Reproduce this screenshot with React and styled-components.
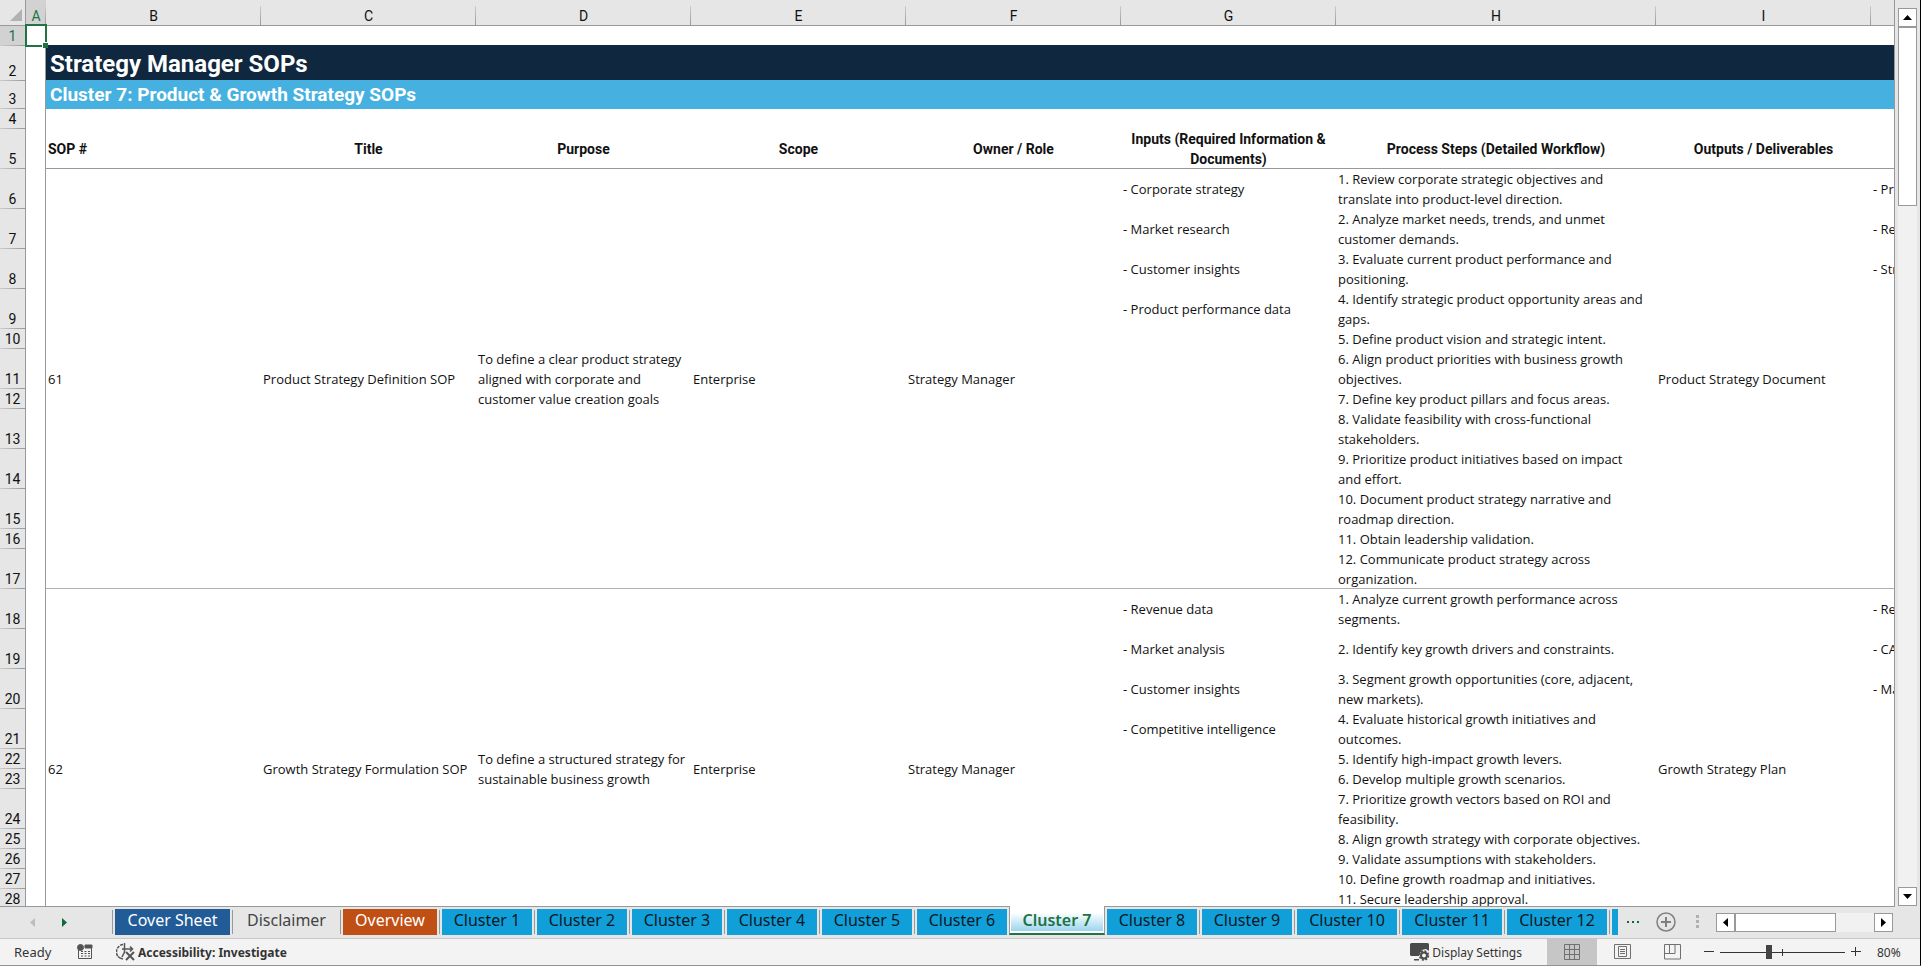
import React from 'react';
import styled, { createGlobalStyle } from 'styled-components';

const line = '#999';
const chrome = '#e6e6e6';
const green = '#217346';
const uiFont = '"Noto Sans", "Open Sans", sans-serif';
const cellFont = '"Open Sans", "Noto Sans", sans-serif';
const headFont = 'Roboto, "Liberation Sans", sans-serif';

const columns = [
  { name: 'A', width: 20 },
  { name: 'B', width: 215 },
  { name: 'C', width: 215 },
  { name: 'D', width: 215 },
  { name: 'E', width: 215 },
  { name: 'F', width: 215 },
  { name: 'G', width: 215 },
  { name: 'H', width: 320 },
  { name: 'I', width: 215 },
  { name: '' },
];

const headings = [
  'Title',
  'Purpose',
  'Scope',
  'Owner / Role',
  'Inputs (Required Information & Documents)',
  'Process Steps (Detailed Workflow)',
  'Outputs / Deliverables',
];

const sops = [
  {
    id: 61,
    firstRow: 6,
    title: 'Product Strategy Definition SOP',
    purpose:
      'To define a clear product strategy aligned with corporate and customer value creation goals',
    scope: 'Enterprise',
    owner: 'Strategy Manager',
    output: 'Product Strategy Document',
    inputs: [
      '- Corporate strategy',
      '- Market research',
      '- Customer insights',
      '- Product performance data',
    ],
    metrics: ['- Pr', '- Re', '- Str'],
    heights: [40, 40, 40, 40, 20, 40, 20, 40, 40, 40, 20, 40],
    steps: [
      '1. Review corporate strategic objectives and translate into product-level direction.',
      '2. Analyze market needs, trends, and unmet customer demands.',
      '3. Evaluate current product performance and positioning.',
      '4. Identify strategic product opportunity areas and gaps.',
      '5. Define product vision and strategic intent.',
      '6. Align product priorities with business growth objectives.',
      '7. Define key product pillars and focus areas.',
      '8. Validate feasibility with cross-functional stakeholders.',
      '9. Prioritize product initiatives based on impact and effort.',
      '10. Document product strategy narrative and roadmap direction.',
      '11. Obtain leadership validation.',
      '12. Communicate product strategy across organization.',
    ],
  },
  {
    id: 62,
    firstRow: 18,
    title: 'Growth Strategy Formulation SOP',
    purpose: 'To define a structured strategy for sustainable business growth',
    scope: 'Enterprise',
    owner: 'Strategy Manager',
    output: 'Growth Strategy Plan',
    inputs: [
      '- Revenue data',
      '- Market analysis',
      '- Customer insights',
      '- Competitive intelligence',
    ],
    metrics: ['- Re', '- CA', '- Ma'],
    heights: [40, 40, 40, 40, 20, 20, 40, 20, 20, 20, 20, 40],
    steps: [
      '1. Analyze current growth performance across segments.',
      '2. Identify key growth drivers and constraints.',
      '3. Segment growth opportunities (core, adjacent, new markets).',
      '4. Evaluate historical growth initiatives and outcomes.',
      '5. Identify high-impact growth levers.',
      '6. Develop multiple growth scenarios.',
      '7. Prioritize growth vectors based on ROI and feasibility.',
      '8. Align growth strategy with corporate objectives.',
      '9. Validate assumptions with stakeholders.',
      '10. Define growth roadmap and initiatives.',
      '11. Secure leadership approval.',
      '',
    ],
  },
];

const blue = '#119fda';
const sheets = [
  { name: 'Cover Sheet', width: 115, color: '#215c98', text: '#fff' },
  { name: 'Disclaimer', width: 103, color: 'transparent', text: '#444' },
  { name: 'Overview', width: 94, color: '#c04f15', text: '#fff' },
  ...Array.from({ length: 12 }, (_, i) => ({
    name: `Cluster ${i + 1}`,
    width: i < 9 ? 90 : 100,
    color: blue,
    text: '#0a1a24',
    active: i === 6,
    plain: i === 7,
  })),
  { name: '', width: 100, color: blue },
];

export default () => (
  <Window>
    <GlobalStyle />
    <Workspace>
      <SheetPane>
        <Sheet>
          <colgroup>
            <Col $width={26} />
            {columns.map(c => <Col key={c.name} $width={c.width} />)}
          </colgroup>
          <thead>
            <tr>
              <Corner>
                <svg width="13" height="13" aria-hidden="true">
                  <path d="M12 0V12H0Z" fill="#b2b2b2" />
                </svg>
              </Corner>
              {columns.map(c => (
                <ColumnHead key={c.name} scope="col" $selected={c.name === 'A'}>
                  {c.name}
                </ColumnHead>
              ))}
            </tr>
          </thead>
          <tbody>
            <Row $height={20}>
              <RowHead $selected>1</RowHead>
              <Margin>
                <Selection />
              </Margin>
              <Cell colSpan={9} $rule="#0f2840" />
            </Row>
            <Row $height={35}>
              <RowHead>2</RowHead>
              <Margin />
              <TitleCell colSpan={9}>Strategy Manager SOPs</TitleCell>
            </Row>
            <Row $height={28}>
              <RowHead>3</RowHead>
              <Margin />
              <SubtitleCell colSpan={9}>
                Cluster 7: Product &amp; Growth Strategy SOPs
              </SubtitleCell>
            </Row>
            <Row $height={20}>
              <RowHead>4</RowHead>
              <Margin />
              <Cell colSpan={9} />
            </Row>
            <Row $height={40}>
              <RowHead>5</RowHead>
              <Margin />
              <HeadingCell $left>SOP #</HeadingCell>
              {headings.map(h => <HeadingCell key={h}>{h}</HeadingCell>)}
              <HeadingCell />
            </Row>
            {sops.map(sop => SopRows(sop))}
          </tbody>
        </Sheet>
      </SheetPane>
      <VerticalBar>
        <ScrollButton aria-label="Scroll up">
          <svg width="9" height="5">
            <path d="M4.5 0L9 5H0Z" />
          </svg>
        </ScrollButton>
        <VerticalThumb />
        <Track />
        <ScrollButton aria-label="Scroll down">
          <svg width="9" height="5">
            <path d="M0 0H9L4.5 5Z" />
          </svg>
        </ScrollButton>
      </VerticalBar>
    </Workspace>

    <TabBar>
      <TabArrows>
        <ArrowButton aria-label="Previous sheet" $color="#bdbdbd">
          <svg width="5" height="9">
            <path d="M5 0V9L0 4.5Z" />
          </svg>
        </ArrowButton>
        <ArrowButton aria-label="Next sheet" $color="#0f6b38">
          <svg width="5" height="9">
            <path d="M0 0V9L5 4.5Z" />
          </svg>
        </ArrowButton>
      </TabArrows>
      <Tabs>
        {sheets.map(s =>
          s.active ? (
            <ActiveTab key={s.name}>{s.name}</ActiveTab>
          ) : (
            <TabSlot key={s.name} $plain={s.plain}>
              <Tab $width={s.width} $color={s.color} $text={s.text}>
                {s.name}
              </Tab>
            </TabSlot>
          )
        )}
      </Tabs>
      <TabTools>
        <IconButton aria-label="More sheets">
          <svg width="12" height="4" fill="#0f6b38">
            <path d="M0 1h2v2H0zM5 1h2v2H5zM10 1h2v2h-2z" />
          </svg>
        </IconButton>
        <IconButton aria-label="New sheet">
          <svg width="20" height="20" fill="none" stroke="#808080">
            <circle cx="10" cy="10" r="9" strokeWidth="1.5" />
            <path d="M10 5v10M5 10h10" strokeWidth="2" />
          </svg>
        </IconButton>
        <svg width="6" height="14" fill="#b0b0b0" aria-hidden="true">
          <path d="M3 0h3v3H3zM3 5h3v3H3zM3 10h3v3H3z" />
        </svg>
        <HorizontalBar>
          <ScrollButton aria-label="Scroll left">
            <svg width="5" height="9">
              <path d="M5 0V9L0 4.5Z" />
            </svg>
          </ScrollButton>
          <HorizontalThumb />
          <Track />
          <ScrollButton aria-label="Scroll right">
            <svg width="5" height="9">
              <path d="M0 0V9L5 4.5Z" />
            </svg>
          </ScrollButton>
        </HorizontalBar>
      </TabTools>
    </TabBar>

    <StatusBar>
      <StatusGroup>
        <Status>Ready</Status>
        <IconButton aria-label="Record macro">
          <MacroIcon />
        </IconButton>
        <StatusButton $bold>
          <AccessibilityIcon />
          Accessibility: Investigate
        </StatusButton>
      </StatusGroup>
      <StatusGroup>
        <StatusButton>
          <DisplayIcon />
          Display Settings
        </StatusButton>
        <Views>
          <ViewButton aria-label="Normal" $on>
            <svg width="16" height="16" fill="none" stroke="#707070">
              <path d="M.5 .5h15v15H.5zM5.500 .5v15M10.500 .5v15M.5 5.500h15M.5 10.500h15" />
            </svg>
          </ViewButton>
          <ViewButton aria-label="Page Layout">
            <svg width="17" height="16" fill="none" stroke="#707070">
              <path d="M.5 .5h16v14H.5zM4.500 2.500h8v10h-8zM6 5.500h5M6 7.500h5M6 9.500h5" />
            </svg>
          </ViewButton>
          <ViewButton aria-label="Page Break Preview">
            <svg width="17" height="16" fill="none" stroke="#707070">
              <path d="M.5 .5h16v14.500H.5zM.5 9.500h10.500v-9M5.500 .5v9" />
            </svg>
          </ViewButton>
        </Views>
        <ZoomGroup>
          <IconButton aria-label="Zoom out">
            <svg width="10" height="10" stroke="#333">
              <path d="M0 4.500h10" />
            </svg>
          </IconButton>
          <ZoomSlider type="range" aria-label="Zoom" min="10" max="190" defaultValue="80" />
          <IconButton aria-label="Zoom in">
            <svg width="10" height="10" stroke="#333">
              <path d="M0 4.500h10M4.500 0v9" />
            </svg>
          </IconButton>
        </ZoomGroup>
        <ZoomValue>80%</ZoomValue>
      </StatusGroup>
    </StatusBar>
  </Window>
);

const SopRows = sop => {
  const span = sop.steps.length;
  return sop.steps.map((step, i) => {
    const rule = i === span - 1 ? '#b0b0b0' : undefined;
    return (
      <Row key={`${sop.id}-${i}`} $height={sop.heights[i]}>
        <RowHead>{step && sop.firstRow + i}</RowHead>
        <Margin />
        {i === 0 &&
          [sop.id, sop.title, sop.purpose, sop.scope, sop.owner].map(text => (
            <Cell key={text} rowSpan={span} $rule="#b0b0b0">{text}</Cell>
          ))}
        <Cell $rule={rule}>{sop.inputs[i]}</Cell>
        <StepCell $rule={rule}>{step}</StepCell>
        {i === 0 && <Cell rowSpan={span} $rule="#b0b0b0">{sop.output}</Cell>}
        <CutCell $rule={rule}>{sop.metrics[i]}</CutCell>
      </Row>
    );
  });
};

const MacroIcon = () => (
  <svg width="16" height="16" fill="none" stroke="#555">
    <path d="M1.500 5v9.500h13V2" />
    <path d="M8 1h7v3H8z" fill="#555" />
    <circle cx="3.500" cy="3.500" r="3" fill="#555" />
    <path d="M4 7.500h2M7.500 7.500h2M11 7.500h2M4 9.500h2M7.500 9.500h2M11 9.500h2M4 12h2M7.500 12h2M11 12h2" />
  </svg>
);

const AccessibilityIcon = () => (
  <svg width="20" height="18" fill="none" stroke="#555" strokeWidth="1.500">
    <path d="M7 1.500A7.500 7.500 0 0 0 2 13.500" strokeDasharray="3 1" />
    <path d="M2 13.500Q4 15.500 7 16" />
    <path d="M8.500 0v6M6 6h10M14 3.500L16.500 6 14 8.500M8.500 6v3L6 14" />
    <path d="M10 9l8 8M18 9l-8 8" strokeWidth="2" />
  </svg>
);

const DisplayIcon = () => (
  <svg width="20" height="18" fill="#4a4a4a">
    <path d="M1.500 0h16A1.500 1.500 0 0 1 19 1.500V8l-3-2-4 1-3 5v1H1.500A1.500 1.500 0 0 1 0 11.500v-10A1.500 1.500 0 0 1 1.500 0zM4 16h5v1.500H4z" />
    <circle cx="14" cy="12.500" r="3" fill="none" stroke="#4a4a4a" strokeWidth="2" />
    <circle cx="14" cy="12.500" r="4.500" fill="none" stroke="#4a4a4a" strokeWidth="1.500" strokeDasharray="2 1.530" />
  </svg>
);

const GlobalStyle = createGlobalStyle`
  body {
    margin: 0;
  }
  * {
    box-sizing: border-box;
  }
  button {
    margin: 0;
    padding: 0;
    border: 0;
    background: none;
    font: inherit;
    color: inherit;
  }
  svg {
    display: block;
    flex: none;
  }
`;

const Window = styled.div`
  display: flex;
  flex-direction: column;
  height: 100vh;
  overflow: hidden;
  border-right: 1px solid #000;
  border-bottom: 1px solid #939393;
  background: ${chrome};
  color: #111;
  font-family: ${uiFont};
  font-size: 13px;
`;

const Workspace = styled.div`
  display: flex;
  flex: 1;
  min-height: 0;
`;

const SheetPane = styled.div`
  flex: 1;
  min-width: 0;
  overflow: hidden;
`;

const Sheet = styled.table`
  width: 100%;
  table-layout: fixed;
  border-spacing: 0;
  font-family: ${cellFont};
  line-height: 20px;

  th,
  td {
    padding: 0;
  }
`;

const Col = styled.col`
  width: ${p => (p.$width ? `${p.$width}px` : 'auto')};
`;

const Corner = styled.td`
  height: 26px;
  border-right: 1px solid ${line};
  border-bottom: 1px solid ${line};

  svg {
    margin: 5px 0 0 10px;
  }
`;

const ColumnHead = styled.th`
  height: 26px;
  border-bottom: 1px solid ${line};
  background: linear-gradient(#ccc, ${line}) right bottom / 1px 19px no-repeat
    ${p => (p.$selected ? '#d2d2d2' : chrome)};
  color: ${p => (p.$selected ? green : '#111')};
  font: 14px/18px ${headFont};
  vertical-align: bottom;

  &:last-child {
    background: ${chrome};
  }
`;

const Row = styled.tr`
  height: ${p => p.$height}px;
`;

const RowHead = styled.th.attrs({ scope: 'row' })`
  border-right: 1px solid ${line};
  background: linear-gradient(to right, #ccc, ${line}) left bottom / 100% 1px no-repeat
    ${p => (p.$selected ? '#d2d2d2' : chrome)};
  color: ${p => (p.$selected ? green : '#111')};
  font: 14px/20px ${headFont};
  vertical-align: bottom;
`;

const Margin = styled.td`
  position: relative;
  background: #fff;
  box-shadow: inset -1px 0 ${line};
`;

const Cell = styled.td`
  background: #fff;
  box-shadow: ${p => (p.$rule ? `inset 0 -1px ${p.$rule}` : 'none')};

  && {
    padding: 0 2px;
  }
`;

const StepCell = styled(Cell)`
  && {
    padding-right: 8px;
  }
`;

const CutCell = styled(Cell)`
  overflow: hidden;
  white-space: nowrap;
`;

const TitleCell = styled(Cell)`
  background: #0f2840;
  box-shadow: inset 0 -1px #46b1e1;
  color: #fff;
  font: bold 24px/28px ${headFont};

  && {
    padding-left: 4px;
  }
`;

const SubtitleCell = styled(TitleCell)`
  background: #46b1e1;
  font-size: 19px;
  line-height: 24px;
`;

const HeadingCell = styled(Cell)`
  box-shadow: inset 0 -1px ${line};
  font: bold 14px/20px ${headFont};
  text-align: ${p => (p.$left ? 'left' : 'center')};
`;

// outline of the active cell, with the fill handle in its corner
const Selection = styled.div`
  position: absolute;
  z-index: 1;
  inset: -2px -1px -1px -1px;
  border: 2px solid ${green};

  &::after {
    content: '';
    position: absolute;
    right: -3px;
    bottom: -3px;
    width: 5px;
    height: 5px;
    border: solid #fff;
    border-width: 1px 0 0 1px;
    background: ${green};
  }
`;

const VerticalBar = styled.div`
  display: flex;
  flex-direction: column;
  width: 26px;
  padding: 8px 3px 0;
  border-left: 1px solid ${line};
`;

const ScrollButton = styled.button`
  display: flex;
  align-items: center;
  justify-content: center;
  flex: none;
  width: 19px;
  height: 19px;

  && {
    border: 1px solid ${line};
    background: #fff;
  }
`;

const VerticalThumb = styled.div`
  height: 179px;
  border: 1px solid ${line};
  background: #fff;
`;

const Track = styled.div`
  flex: 1;
  background: #f1f1f1;
`;

const TabBar = styled.div`
  display: flex;
  flex: none;
  height: 33px;
  border-bottom: 1px solid #c6c6c6;
  background: linear-gradient(${line}, ${line}) left top / calc(100% - 25px) 1px no-repeat;
`;

const TabArrows = styled.div`
  display: flex;
  align-items: center;
  gap: 27px;
  width: 112px;
  padding-left: 30px;
`;

const ArrowButton = styled.button`
  && {
    color: ${p => p.$color};
  }

  svg {
    fill: currentColor;
  }
`;

const Tabs = styled.nav`
  display: flex;
  flex: 1;
  min-width: 0;
  overflow: hidden;
  font-size: 16px;
`;

const TabSlot = styled.div`
  flex: none;
  padding: 3px 2px 0 ${p => (p.$plain ? 2 : 3)}px;
  background: linear-gradient(${line}, ${line}) left 4px / ${p => (p.$plain ? 0 : 1)}px 24px no-repeat;
`;

const Tab = styled.button`
  width: ${p => p.$width}px;
  height: 26px;

  && {
    padding-bottom: 4px;
    background: ${p => p.$color};
    color: ${p => p.$text};
    line-height: 22px;
  }
`;

const ActiveTab = styled.button`
  flex: none;
  width: 96px;
  height: 29px;

  && {
    padding: 2px 1px;
    border: solid ${line};
    border-width: 0 1px 2px;
    border-bottom-color: ${green};
    background: linear-gradient(#fff 20%, #9bd5ee) content-box, #fff;
    color: ${green};
    font-weight: 600;
    line-height: 22px;
  }
`;

const TabTools = styled.div`
  display: flex;
  align-items: center;
  flex: none;
  gap: 17px;
  padding: 0 27px 0 9px;
`;

const IconButton = styled.button`
  display: flex;
  align-items: center;
`;

const HorizontalBar = styled.div`
  display: flex;
  width: 177px;
`;

const HorizontalThumb = styled.div`
  width: 101px;
  border: 1px solid ${line};
  background: #fff;
`;

const StatusBar = styled.div`
  display: flex;
  justify-content: space-between;
  flex: none;
  height: 26px;
  background: #f3f3f3;
  color: #333;
`;

const StatusGroup = styled.div`
  display: flex;
  align-items: center;
`;

const Status = styled.span`
  width: 77px;
  padding-left: 14px;
`;

const StatusButton = styled.button`
  display: flex;
  align-items: center;
  gap: 2px;

  && {
    margin-left: ${p => (p.$bold ? 23 : 0)}px;
    font-size: 12px;
    font-weight: ${p => (p.$bold ? 700 : 400)};
  }
`;

const Views = styled.div`
  display: flex;
  align-self: stretch;
  padding-left: 25px;
`;

const ViewButton = styled.button`
  display: flex;
  align-items: center;
  justify-content: center;
  width: 50px;

  && {
    background: ${p => (p.$on ? '#c6c6c6' : 'none')};
  }
`;

const ZoomGroup = styled.div`
  display: flex;
  align-items: center;
  gap: 6px;
  padding-left: 7px;
`;

const ZoomSlider = styled.input`
  appearance: none;
  width: 125px;
  height: 14px;
  margin: 0;
  background: linear-gradient(#333, #333) center / 100% 1px no-repeat,
    linear-gradient(#333, #333) center / 1px 7px no-repeat;

  &::-webkit-slider-thumb {
    appearance: none;
    width: 6px;
    height: 14px;
    background: #444;
  }
`;

const ZoomValue = styled.span`
  width: 59px;
  padding-left: 16px;
  font-size: 12px;
`;
